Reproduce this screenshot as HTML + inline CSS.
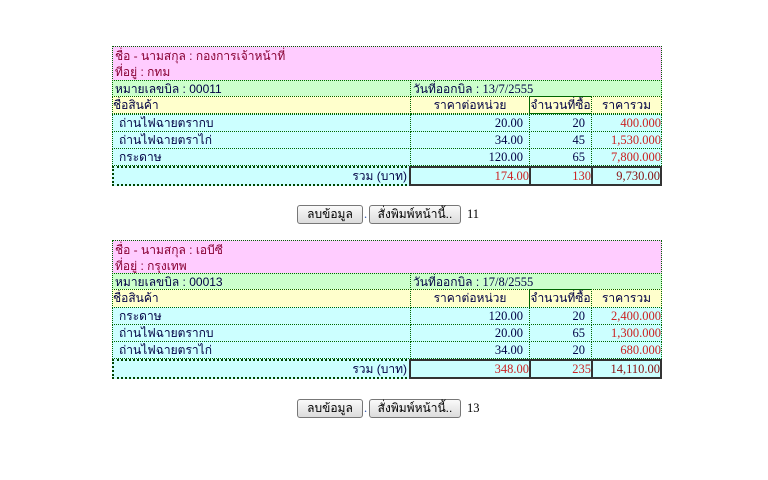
<!DOCTYPE html>
<html><head><meta charset="utf-8"><style>
body{margin:0;width:768px;height:480px;background:#fff;position:relative;font-family:"Liberation Sans","Noto Sans CJK SC",sans-serif;font-size:12px;color:#000044;overflow:hidden}
.c{position:absolute;box-sizing:border-box;border:1px dotted #006600;white-space:nowrap;line-height:16px;padding:0 2px;overflow:hidden}
.n{font-family:"Liberation Serif",serif;font-size:12.5px}
.r{text-align:right}.ce{text-align:center}
.red{color:#cc2222}
.p{background:#ffccff;color:#880033}
.g{background:#ccffcc}
.y{background:#ffffcc}
.b{background:#ccffff}
.t{border:2px solid #333}
.t1{border:2px dotted #004400}
.btn{position:absolute;box-sizing:border-box;height:19px;border:1px solid #777;border-radius:3px;background:linear-gradient(#fafafa,#dcdcdc);font-size:12px;line-height:17px;text-align:center;color:#000}
.txt{position:absolute;font-family:"Liberation Serif",serif;font-size:12.5px;color:#000}
</style></head><body>

<div class="c p" style="left:112px;top:46px;width:550px;height:35px;padding-top:1px">ชื่อ - นามสกุล : กองการเจ้าหน้าที่<br>ที่อยู่ : กทม</div>
<div class="c g" style="left:112px;top:80px;width:299px;height:17px">หมายเลขบิล : 00011</div>
<div class="c g" style="left:410px;top:80px;width:252px;height:17px">วันที่ออกบิล : <span class="n">13/7/2555</span></div>
<div class="c y" style="left:112px;top:96px;width:299px;height:18px;padding:0">ชื่อสินค้า</div>
<div class="c y ce" style="left:410px;top:96px;width:120px;height:18px">ราคาต่อหน่วย</div>
<div class="c y ce" style="left:529px;top:96px;width:63px;height:18px;border:1px solid #006600;padding:0">จำนวนที่ซื้อ</div>
<div class="c y ce" style="left:591px;top:96px;width:71px;height:18px">ราคารวม</div>

<div class="c b" style="left:112px;top:114px;width:299px;height:18px;padding-left:6px">ถ่านไฟฉายตรากบ</div>
<div class="c b r n" style="left:410px;top:114px;width:120px;height:18px;padding-right:6px">20.00</div>
<div class="c b r n" style="left:529px;top:114px;width:63px;height:18px;padding-right:6px">20</div>
<div class="c b r n red" style="left:591px;top:114px;width:71px;height:18px;padding-right:0">400.000</div>

<div class="c b" style="left:112px;top:131px;width:299px;height:18px;padding-left:6px">ถ่านไฟฉายตราไก่</div>
<div class="c b r n" style="left:410px;top:131px;width:120px;height:18px;padding-right:6px">34.00</div>
<div class="c b r n" style="left:529px;top:131px;width:63px;height:18px;padding-right:6px">45</div>
<div class="c b r n red" style="left:591px;top:131px;width:71px;height:18px;padding-right:0">1,530.000</div>

<div class="c b" style="left:112px;top:148px;width:299px;height:18px;padding-left:6px">กระดาษ</div>
<div class="c b r n" style="left:410px;top:148px;width:120px;height:18px;padding-right:6px">120.00</div>
<div class="c b r n" style="left:529px;top:148px;width:63px;height:18px;padding-right:6px">65</div>
<div class="c b r n red" style="left:591px;top:148px;width:71px;height:18px;padding-right:0">7,800.000</div>

<div class="c b r t1" style="left:112px;top:166px;width:299px;height:20px">รวม (บาท)</div>
<div class="c b r n red t" style="left:409px;top:166px;width:122px;height:20px;padding-right:0">174.00</div>
<div class="c b r n red t" style="left:529px;top:166px;width:64px;height:20px;padding-right:0">130</div>
<div class="c b r n t" style="left:591px;top:166px;width:71px;height:20px;padding-right:0;color:#881111">9,730.00</div>

<div class="btn" style="left:297px;top:205px;width:66px">ลบข้อมูล</div>
<div class="txt" style="left:364px;top:207px;color:#3355aa">.</div>
<div class="btn" style="left:369px;top:205px;width:92px">สั่งพิมพ์หน้านี้..</div>
<div class="txt" style="left:467px;top:207px">11</div>

<div class="c p" style="left:112px;top:240px;width:550px;height:34px;padding-top:1px">ชื่อ - นามสกุล : เอบีซี<br>ที่อยู่ : กรุงเทพ</div>
<div class="c g" style="left:112px;top:273px;width:299px;height:17px">หมายเลขบิล : 00013</div>
<div class="c g" style="left:410px;top:273px;width:252px;height:17px">วันที่ออกบิล : <span class="n">17/8/2555</span></div>
<div class="c y" style="left:112px;top:289px;width:299px;height:19px;padding:0">ชื่อสินค้า</div>
<div class="c y ce" style="left:410px;top:289px;width:120px;height:19px">ราคาต่อหน่วย</div>
<div class="c y ce" style="left:529px;top:289px;width:63px;height:19px;border:1px solid #006600;padding:0">จำนวนที่ซื้อ</div>
<div class="c y ce" style="left:591px;top:289px;width:71px;height:19px">ราคารวม</div>

<div class="c b" style="left:112px;top:307px;width:299px;height:18px;padding-left:6px">กระดาษ</div>
<div class="c b r n" style="left:410px;top:307px;width:120px;height:18px;padding-right:6px">120.00</div>
<div class="c b r n" style="left:529px;top:307px;width:63px;height:18px;padding-right:6px">20</div>
<div class="c b r n red" style="left:591px;top:307px;width:71px;height:18px;padding-right:0">2,400.000</div>

<div class="c b" style="left:112px;top:324px;width:299px;height:18px;padding-left:6px">ถ่านไฟฉายตรากบ</div>
<div class="c b r n" style="left:410px;top:324px;width:120px;height:18px;padding-right:6px">20.00</div>
<div class="c b r n" style="left:529px;top:324px;width:63px;height:18px;padding-right:6px">65</div>
<div class="c b r n red" style="left:591px;top:324px;width:71px;height:18px;padding-right:0">1,300.000</div>

<div class="c b" style="left:112px;top:341px;width:299px;height:18px;padding-left:6px">ถ่านไฟฉายตราไก่</div>
<div class="c b r n" style="left:410px;top:341px;width:120px;height:18px;padding-right:6px">34.00</div>
<div class="c b r n" style="left:529px;top:341px;width:63px;height:18px;padding-right:6px">20</div>
<div class="c b r n red" style="left:591px;top:341px;width:71px;height:18px;padding-right:0">680.000</div>

<div class="c b r t1" style="left:112px;top:359px;width:299px;height:20px">รวม (บาท)</div>
<div class="c b r n red t" style="left:409px;top:359px;width:122px;height:20px;padding-right:0">348.00</div>
<div class="c b r n red t" style="left:529px;top:359px;width:64px;height:20px;padding-right:0">235</div>
<div class="c b r n t" style="left:591px;top:359px;width:71px;height:20px;padding-right:0;color:#881111">14,110.00</div>

<div class="btn" style="left:297px;top:399px;width:66px">ลบข้อมูล</div>
<div class="txt" style="left:364px;top:401px;color:#3355aa">.</div>
<div class="btn" style="left:369px;top:399px;width:92px">สั่งพิมพ์หน้านี้..</div>
<div class="txt" style="left:467px;top:401px">13</div>

</body></html>
